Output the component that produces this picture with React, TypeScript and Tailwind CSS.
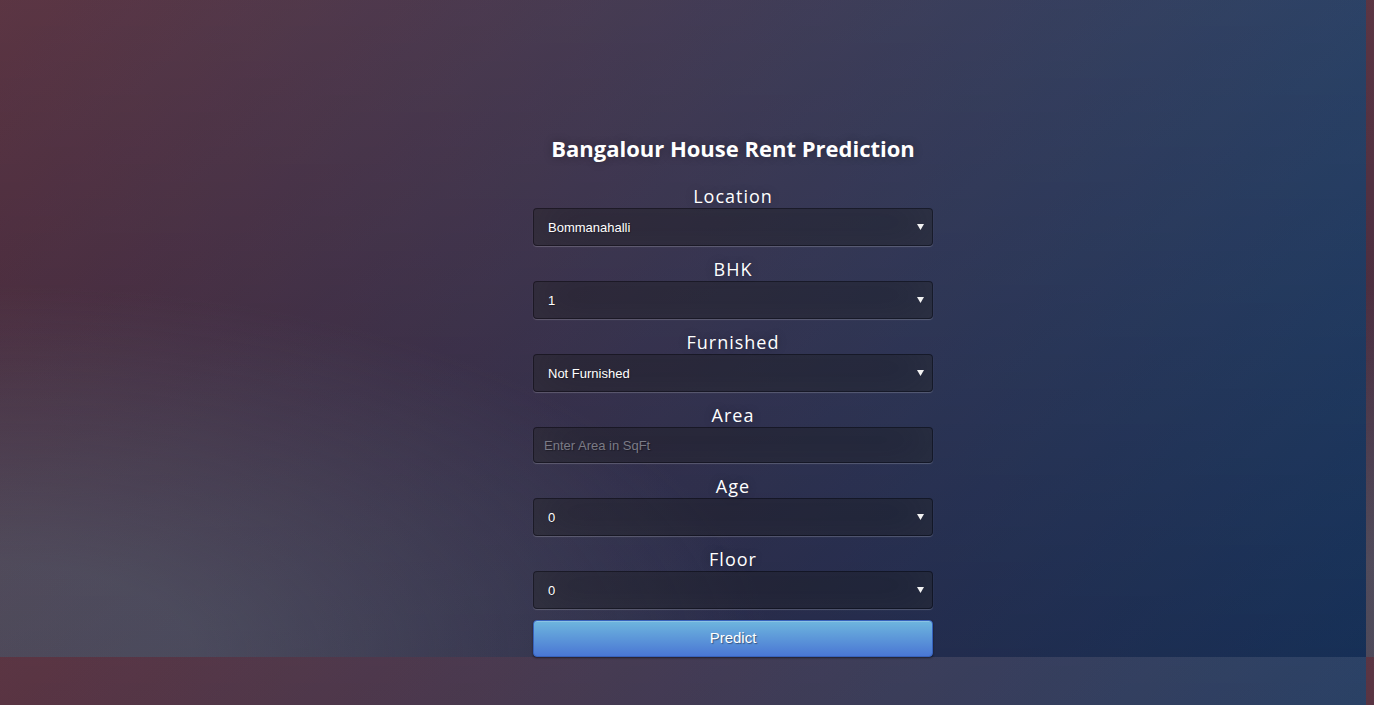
import type { ReactNode } from "react"

const fieldBox =
  "w-full rounded-[4px] border border-[rgba(0,0,0,0.3)] bg-[rgba(0,0,0,0.3)] text-[13px] text-white [font-family:'Liberation_Sans',Arial,sans-serif] [text-shadow:1px_1px_1px_rgba(0,0,0,0.3)] shadow-[inset_0_-5px_45px_rgba(100,100,100,0.2),0_1px_1px_rgba(255,255,255,0.2)] outline-none"

function Label({ children }: { children: ReactNode }) {
  return (
    <div className="mt-[11px] h-[24px] text-center text-[18px] leading-[24px] tracking-[1px] text-white [text-shadow:0_0_10px_rgba(0,0,0,0.3)]">
      {children}
    </div>
  )
}

function Select({ value, options }: { value: string; options: string[] }) {
  return (
    <div className="relative">
      <select
        defaultValue={value}
        className={`${fieldBox} h-[38px] appearance-none pl-[14px] pr-8 pt-[1px]`}
      >
        {options.map((o) => (
          <option key={o} value={o} className="bg-[#1e2438] text-white">
            {o}
          </option>
        ))}
      </select>
      {/* dropdown arrow */}
      <svg
        className="pointer-events-none absolute right-[9px] top-[16px] h-[6px] w-[7px]"
        viewBox="0 0 7 6"
        aria-hidden="true"
      >
        <polygon points="0,0 7,0 3.5,6" fill="#f2f2f2" />
      </svg>
    </div>
  )
}

export default function App() {
  return (
    <div className="h-[705px] w-full overflow-hidden bg-[#092756] bg-[image:radial-gradient(ellipse_at_0%_100%,rgba(104,128,138,.4)_10%,rgba(138,114,76,0)_40%),linear-gradient(to_bottom,rgba(57,173,218,.25)_0%,rgba(42,60,87,.4)_100%),linear-gradient(135deg,#670d10_0%,#092756_100%)] bg-[length:1366px_657px] bg-repeat [font-family:'Open_Sans',sans-serif]">
      <div className="ml-[533px] w-[400px] pt-[129px]">
        <h1 className="-mx-[60px] mb-[6px] h-[38px] whitespace-nowrap text-center text-[22px] font-bold leading-[38px] text-white [text-shadow:0_0_10px_rgba(0,0,0,0.3)]">
          Bangalour House Rent Prediction
        </h1>

        <form className="flex flex-col" onSubmit={(e) => e.preventDefault()}>
          <Label>Location</Label>
          <Select
            value="Bommanahalli"
            options={["Bommanahalli", "Electronic City", "Whitefield", "Marathahalli", "BTM Layout"]}
          />

          <Label>BHK</Label>
          <Select value="1" options={["1", "2", "3", "4", "5"]} />

          <Label>Furnished</Label>
          <Select value="Not Furnished" options={["Not Furnished", "Semi Furnished", "Fully Furnished"]} />

          <Label>Area</Label>
          <input
            type="text"
            placeholder="Enter Area in SqFt"
            className={`${fieldBox} h-[36px] px-[10px] placeholder:text-[#7b7b86]`}
          />

          <Label>Age</Label>
          <Select value="0" options={["0", "1", "2", "3", "4", "5"]} />

          <Label>Floor</Label>
          <Select value="0" options={["0", "1", "2", "3", "4", "5"]} />

          <button
            type="submit"
            className="mt-[11px] h-[37px] w-full rounded-[4px] border border-[#3762bc] bg-[#4a77d4] bg-[image:linear-gradient(to_bottom,#6eb6de,#4a77d4)] text-[15px] text-white [font-family:'Liberation_Sans',Arial,sans-serif] [text-shadow:1px_1px_1px_rgba(0,0,0,0.4)] shadow-[inset_0_1px_0_rgba(255,255,255,0.2),0_1px_2px_rgba(0,0,0,0.5)]"
          >
            Predict
          </button>
        </form>
      </div>
    </div>
  )
}
